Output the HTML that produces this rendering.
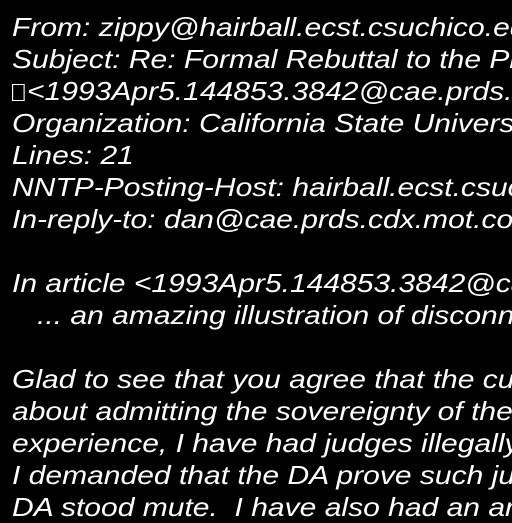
<!DOCTYPE html>
<html><head><style>
html,body{margin:0;padding:0;background:#000;width:512px;height:512px;overflow:hidden}
pre{margin:0;position:absolute;left:12px;top:11px;font-family:"Liberation Sans",sans-serif;font-style:italic;font-size:26px;line-height:32px;color:#fff;white-space:pre;transform:scaleX(1.155);transform-origin:0 0}
.b{display:inline-block;width:11px;height:17px;border:1px solid #fff;box-sizing:border-box;margin-right:2px;vertical-align:-1px}
</style></head><body><pre>From: zippy@hairball.ecst.csuchico.ed
Subject: Re: Formal Rebuttal to the Pr
<span class="b"></span>&lt;1993Apr5.144853.3842@cae.prds.cd
Organization: California State Universi
Lines: 21
NNTP-Posting-Host: hairball.ecst.csuch
In-reply-to: dan@cae.prds.cdx.mot.com

In article &lt;1993Apr5.144853.3842@ca
   ... an amazing illustration of disconn

Glad to see that you agree that the cur
about admitting the sovereignty of the
experience, I have had judges illegally
I demanded that the DA prove such jur
DA stood mute.  I have also had an ar</pre></body></html>
